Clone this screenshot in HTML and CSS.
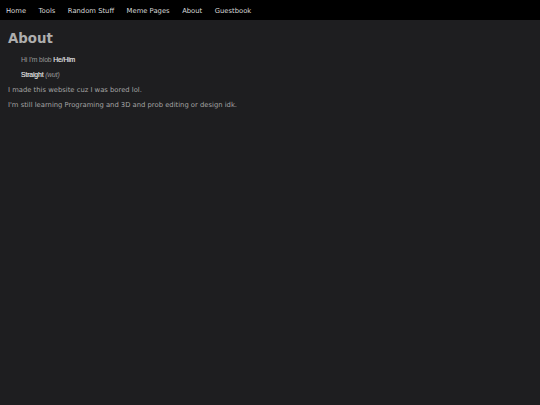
FILE: index.html
```html
<!DOCTYPE html>
<html>
<head>
<meta charset="utf-8">
<link rel="stylesheet" href="styles.css">
</head>
<body>
<nav class="topnav">
  <a class="navlink">Home</a>
  <a class="navlink">Tools</a>
  <a class="navlink">Random Stuff</a>
  <a class="navlink">Meme Pages</a>
  <a class="navlink">About</a>
  <a class="navlink">Guestbook</a>
</nav>
<main class="content">
  <h1 class="title">About</h1>
  <p class="small">Hi I'm blob <span class="hl">He/Him</span></p>
  <p class="small"><span class="hl">Straight</span> <i class="note">(wut)</i></p>
  <p class="text">I made this website cuz I was bored lol.</p>
  <p class="text">I'm still learning Programing and 3D and prob editing or design idk.</p>
</main>
</body>
</html>
```

FILE: styles.css
```css
html, body {
  margin: 0;
  padding: 0;
  background: #1e1e20;
  height: 100%;
}
body {
  font-family: "DejaVu Sans", sans-serif;
}
.topnav {
  box-sizing: border-box;
  height: 20px;
  padding-top: 1px;
  background: #000;
  display: flex;
  align-items: center;
  gap: 12.5px;
  padding-left: 6px;
  font-size: 6.8px;
}
.navlink {
  color: #d8d8d8;
}
.content {
  padding: 0 8px;
  display: flex;
  flex-direction: column;
}
.title {
  margin: 11px 0 0;
  font-size: 13.33px;
  line-height: 16px;
  color: #aeaeae;
  font-weight: bold;
}
.small {
  margin: 8px 0 0 13px;
  font-family: "Liberation Sans", Arial, sans-serif;
  font-size: 6.85px;
  line-height: 10px;
  color: #9a9a9a;
  letter-spacing: -0.15px;
}
.small + .small {
  margin-top: 5px;
}
.hl {
  color: #e4e4e4;
  -webkit-text-stroke: 0.15px #e4e4e4;
}
.note {
  color: #9a9a9a;
}
.text {
  margin: 5px 0 0;
  font-size: 6.8px;
  line-height: 10px;
  color: #a4a4a4;
}
.text + .text {
  margin-top: 5px;
}
```
